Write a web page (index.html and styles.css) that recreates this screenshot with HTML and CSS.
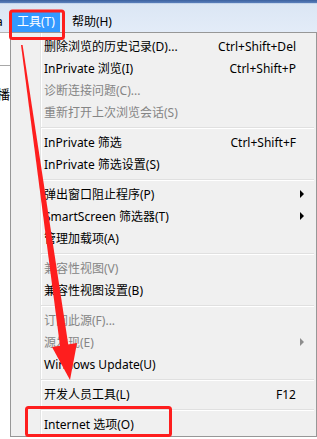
FILE: index.html
```html
<!DOCTYPE html>
<html lang="zh-CN">
<head>
<meta charset="utf-8">
<title>IE 工具菜单</title>
<link rel="stylesheet" href="styles.css">
</head>
<body>
<div class="screen">
  <div class="titlebar"></div>
  <div class="menubar">
    <span class="mb-cut">a</span>
    <span class="mb-item active">工具(T)</span>
    <span class="mb-item">帮助(H)</span>
  </div>
  <div class="main">
    <div class="side">
      <div class="side-top"></div>
      <div class="side-text">播</div>
    </div>
    <div class="menu">
      <div class="item"><span class="label">删除浏览的历史记录(D)...</span><span class="key">Ctrl+Shift+Del</span><span class="sub"></span></div>
      <div class="item"><span class="label">InPrivate 浏览(I)</span><span class="key">Ctrl+Shift+P</span><span class="sub"></span></div>
      <div class="item disabled"><span class="label">诊断连接问题(C)...</span><span class="key"></span><span class="sub"></span></div>
      <div class="item disabled"><span class="label">重新打开上次浏览会话(S)</span><span class="key"></span><span class="sub"></span></div>
      <div class="sep"></div>
      <div class="item"><span class="label">InPrivate 筛选</span><span class="key">Ctrl+Shift+F</span><span class="sub"></span></div>
      <div class="item"><span class="label">InPrivate 筛选设置(S)</span><span class="key"></span><span class="sub"></span></div>
      <div class="sep"></div>
      <div class="item"><span class="label">弹出窗口阻止程序(P)</span><span class="key"></span><span class="sub"><i class="tri"></i></span></div>
      <div class="item"><span class="label">SmartScreen 筛选器(T)</span><span class="key"></span><span class="sub"><i class="tri"></i></span></div>
      <div class="item"><span class="label">管理加载项(A)</span><span class="key"></span><span class="sub"></span></div>
      <div class="sep"></div>
      <div class="item disabled"><span class="label">兼容性视图(V)</span><span class="key"></span><span class="sub"></span></div>
      <div class="item"><span class="label">兼容性视图设置(B)</span><span class="key"></span><span class="sub"></span></div>
      <div class="sep"></div>
      <div class="item disabled"><span class="label">订阅此源(F)...</span><span class="key"></span><span class="sub"></span></div>
      <div class="item disabled"><span class="label">源发现(E)</span><span class="key"></span><span class="sub"><i class="tri"></i></span></div>
      <div class="item"><span class="label">Windows Update(U)</span><span class="key"></span><span class="sub"></span></div>
      <div class="sep"></div>
      <div class="item"><span class="label">开发人员工具(L)</span><span class="key">F12</span><span class="sub"></span></div>
      <div class="sep"></div>
      <div class="item"><span class="label">Internet 选项(O)</span><span class="key"></span><span class="sub"></span></div>
    </div>
  </div>
  <svg class="annot" width="317" height="439" viewBox="0 0 317 439" xmlns="http://www.w3.org/2000/svg">
    <rect x="10.5" y="11" width="53" height="27.5" rx="2" fill="none" stroke="#fe1e1e" stroke-width="3"/>
    <rect x="26.5" y="407.5" width="144" height="28" rx="2" fill="none" stroke="#fe1e1e" stroke-width="3"/>
    <polygon points="21,45 22.6,45 68.5,346 60,346" fill="#fe1e1e"/>
    <polygon points="52,347 77,343 70,380" fill="#fe1e1e"/>
  </svg>
</div>
</body>
</html>
```
FILE: styles.css
```css
html, body {
  margin: 0;
  padding: 0;
}
body {
  width: 317px;
  height: 439px;
  overflow: hidden;
  background: #ffffff;
  font-family: "Noto Sans", "Noto Sans CJK SC", sans-serif;
  font-size: 12px;
  color: #000;
}
.screen {
  position: relative;
  width: 317px;
  height: 439px;
  overflow: hidden;
}
.titlebar {
  height: 4px;
  background: linear-gradient(#3c619f 0, #5b80bb 3px, #c3d4eb 3px, #c3d4eb 4px);
}
.menubar {
  height: 28px;
  display: flex;
  align-items: flex-end;
  background: linear-gradient(#dbe6f4, #e3ecf8);
}
.mb-cut {
  width: 16px;
  margin-left: -4px;
  height: 20px;
  line-height: 20px;
  flex-shrink: 0;
}
.mb-item {
  height: 20px;
  line-height: 20px;
  padding: 0 5px;
  white-space: nowrap;
}
.mb-item.active {
  background: #3399ff;
  color: #fff;
  margin-right: 7px;
}
.main {
  display: flex;
  height: 407px;
}
.side {
  width: 10px;
  flex-shrink: 0;
  background: #fff;
  overflow: hidden;
}
.side-top {
  height: 32px;
  border-top: 1px solid #b4b4b4;
  border-bottom: 1px solid #a8a8a8;
}
.side-text {
  margin-left: -3px;
  margin-top: 20px;
  line-height: 16px;
  font-size: 13px;
}
.menu {
  width: 307px;
  flex-shrink: 0;
  box-sizing: border-box;
  border: 1px solid #979797;
  padding: 2px 2px 1px 2px;
  background:
    linear-gradient(to right, transparent 29px, #e2e3e3 29px, #e2e3e3 30px, #ffffff 30px, #ffffff 31px, transparent 31px),
    #f0f0f0;
  align-self: flex-start;
}
.item {
  height: 22px;
  display: flex;
  align-items: center;
  padding: 0 10px 0 31px;
  white-space: nowrap;
}
.item .label {
  flex: 1;
}
.item .key {
  text-align: right;
}
.item .sub {
  width: 8px;
  display: flex;
  justify-content: flex-end;
}
.tri {
  display: block;
  width: 0;
  height: 0;
  border-left: 4px solid #000;
  border-top: 4px solid transparent;
  border-bottom: 4px solid transparent;
}
.item.disabled {
  color: #858585;
}
.item.disabled .tri {
  border-left-color: #8d8d8d;
}
.sep {
  height: 8px;
  margin-left: 28px;
  background: linear-gradient(transparent 4px, #e0e0e0 4px, #e0e0e0 5px, #ffffff 5px, #ffffff 6px, transparent 6px);
}
.annot {
  position: absolute;
  left: 0;
  top: 0;
  pointer-events: none;
}
```
